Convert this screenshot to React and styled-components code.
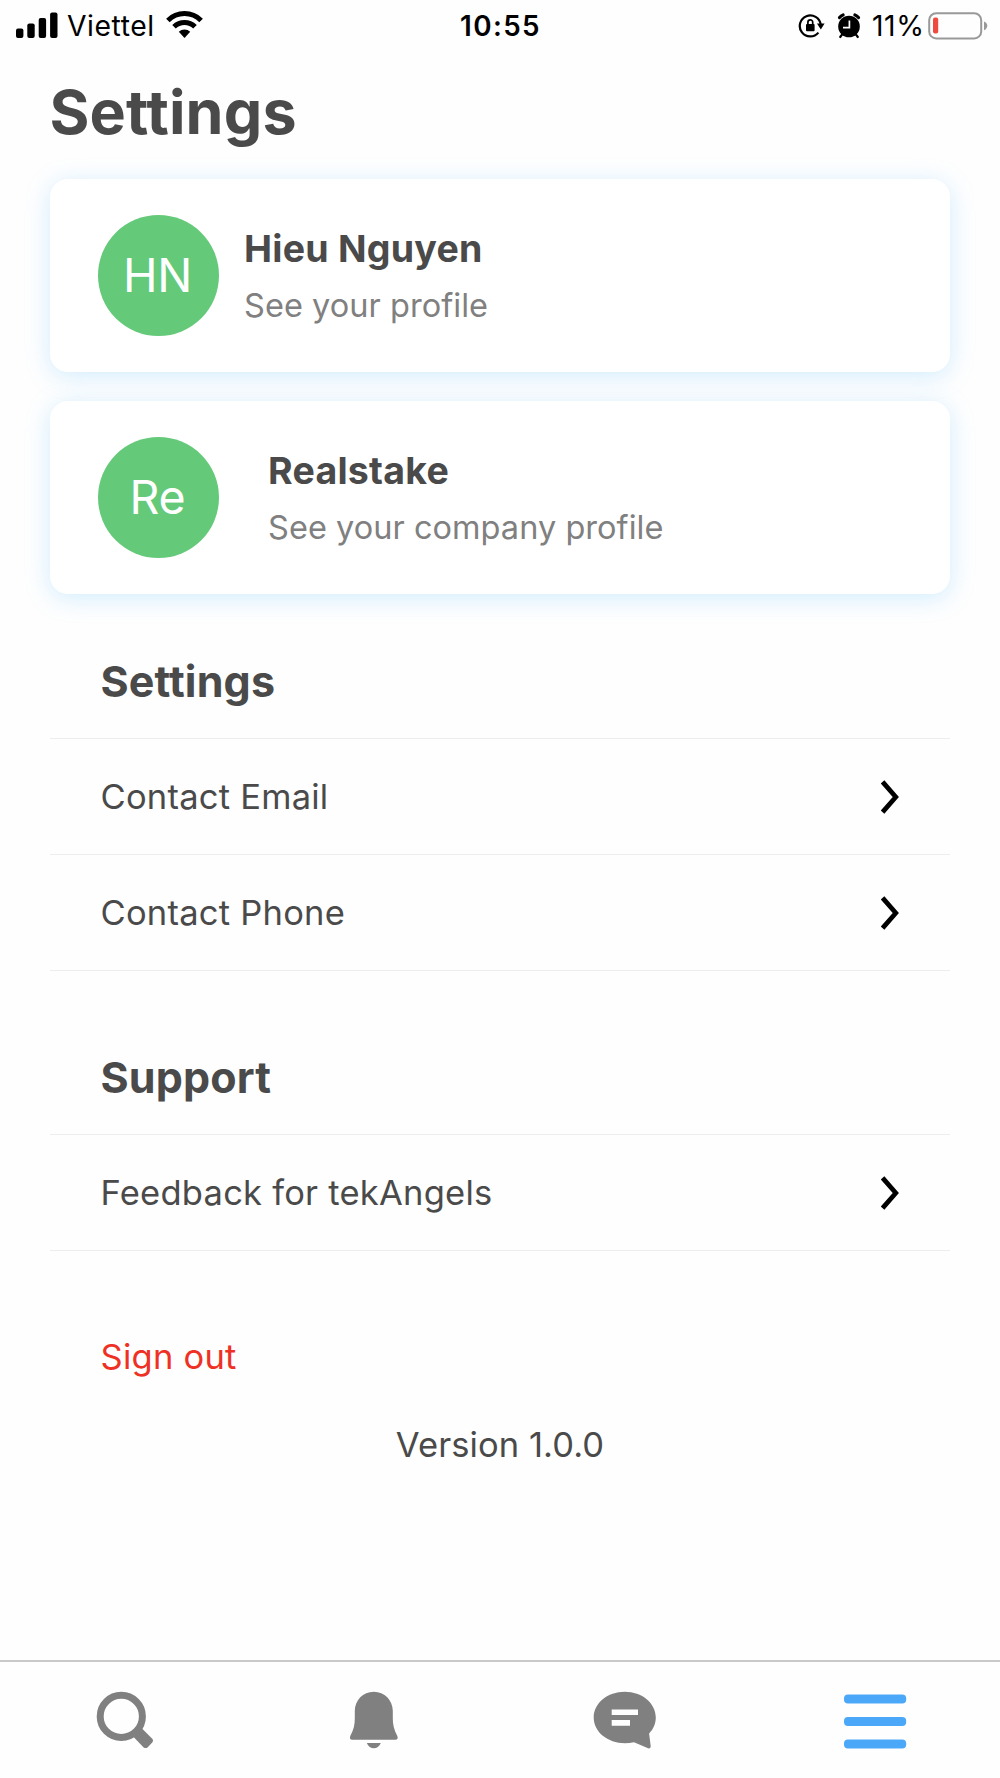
import React from 'react';
import styled, { createGlobalStyle } from 'styled-components';

const colors = {
  text: '#4a4a4a',
  gray: '#808080',
  green: '#65c97a',
  red: '#ee3124',
  blue: '#4ba8f8',
};

const GlobalStyle = createGlobalStyle`
  * {
    box-sizing: border-box;
    margin: 0;
    padding: 0;
  }

  body {
    background-color: #fefefe;
    font-family: Inter, 'Liberation Sans', sans-serif;
    color: ${colors.text};
  }

  svg {
    display: block;
    flex-shrink: 0;
  }
`;

const Screen = styled.div`
  width: 1000px;
  height: 1778px;
  display: flex;
  flex-direction: column;
  overflow: hidden;
`;

const StatusBar = styled.header`
  height: 50px;
  display: grid;
  grid-template-columns: 1fr auto 1fr;
  align-items: center;
  padding: 0 12px;
  color: #000;
`;

const StatusSide = styled.div`
  display: flex;
  align-items: center;
  padding-left: 4px;
  justify-content: ${(props) => (props.$right ? 'flex-end' : 'flex-start')};
`;

const StatusIcons = styled.div`
  display: flex;
  align-items: center;
  gap: 12px;
`;

const StatusText = styled.span`
  padding-top: 1px;
  font-size: 28.3px;
  line-height: 50px;
  letter-spacing: 0.55px;
  margin: ${(props) => props.$margin};
`;

const Clock = styled.span`
  padding: 1px 0 0 1px;
  font-size: 27.8px;
  font-weight: 600;
  line-height: 50px;
  letter-spacing: 1.4px;
`;

const Content = styled.main`
  flex: 1;
  padding: 0 50px;
`;

const PageTitle = styled.h1`
  height: 129px;
  padding-top: 22px;
  font-size: 61px;
  font-weight: 700;
  line-height: 80px;
  letter-spacing: 0.15px;
  text-indent: -0.5px;
`;

const ProfileCard = styled.section`
  height: 193px;
  margin-bottom: 29px;
  padding-left: 48px;
  display: flex;
  align-items: center;
  gap: ${(props) => props.$gap};
  border-radius: 18px;
  background-color: #fff;
  box-shadow: 0 4px 24px rgba(90, 190, 250, 0.27);
`;

const Avatar = styled.div`
  width: 121px;
  height: 121px;
  padding: 0 2px 1px 0;
  border-radius: 50%;
  display: flex;
  align-items: center;
  justify-content: center;
  background-color: ${colors.green};
  color: #fff;
  font-size: 46.5px;
  letter-spacing: -0.3px;
`;

const ProfileText = styled.div`
  display: flex;
  flex-direction: column;
  gap: 9px;
  padding-top: 3px;
`;

const ProfileName = styled.p`
  font-size: 37.5px;
  font-weight: 700;
  line-height: 48px;
  letter-spacing: 0.25px;
`;

const ProfileLink = styled.p`
  font-size: 32.5px;
  line-height: 48px;
  letter-spacing: 0.04px;
  color: ${colors.gray};
`;

const Section = styled.section`
  margin-bottom: ${(props) => props.$bottom};
`;

const SectionTitle = styled.h2`
  height: 115px;
  padding: 30px 50px 0;
  font-size: 43px;
  font-weight: 700;
  line-height: 56px;
  letter-spacing: 0.15px;
  text-indent: 0.5px;
`;

const Row = styled.div`
  height: 116px;
  padding: 0 51px 0 50.5px;
  display: flex;
  align-items: center;
  justify-content: space-between;
  border-top: 1px solid #ecedee;
  font-size: 34.5px;
  letter-spacing: 0.24px;

  &:last-child {
    height: 117px;
    border-bottom: 1px solid #ecedee;
  }
`;

const SignOut = styled.p`
  padding-left: 50.5px;
  font-size: 34.5px;
  line-height: 48px;
  letter-spacing: 0.25px;
  color: ${colors.red};
`;

const Version = styled.p`
  margin-top: 40px;
  font-size: 34.5px;
  line-height: 48px;
  letter-spacing: 0.08px;
  text-align: center;
`;

const TabBar = styled.nav`
  height: 118px;
  padding-top: 26px;
  display: grid;
  grid-template-columns: repeat(4, 1fr);
  justify-items: center;
  border-top: 2px solid #c9c9c9;
  color: ${colors.gray};
`;

const Tab = styled.div`
  width: 64px;
  height: 64px;
  color: ${(props) => (props.$active ? colors.blue : 'inherit')};
`;

const SignalIcon = () => (
  <svg width="42" height="27" viewBox="0 0 42 27">
    <rect x="0" y="16.5" width="7.4" height="9.5" rx="2" />
    <rect x="11.3" y="11.5" width="7.4" height="14.5" rx="2" />
    <rect x="22.7" y="6" width="7.4" height="20" rx="2" />
    <rect x="34.1" y="0.5" width="7.4" height="25.5" rx="2" />
  </svg>
);

const WifiIcon = () => (
  <svg width="37" height="29" viewBox="0 0 37 29">
    <g fill="none" stroke="#000">
      <path d="M1.9 9.4a23.5 23.5 0 0 1 33.2 0" strokeWidth="5" />
      <path d="M8 15.8a14.8 14.8 0 0 1 21 0" strokeWidth="5" />
    </g>
    <path d="M12.8 20.8a8.1 8.1 0 0 1 11.4 0L18.5 27Z" />
  </svg>
);

const RotationLockIcon = () => (
  <svg width="27" height="27" viewBox="0 0 27 27">
    <path
      d="M22.7 12.6A10.5 10.5 0 1 0 20.4 20.6"
      fill="none"
      stroke="#000"
      strokeWidth="2.2"
    />
    <path d="M19 11.4h7.6l-3.8 6Z" />
    <rect x="8" y="12" width="8.6" height="7.2" rx="1" />
    <path
      d="M9.9 13v-2.8a2.4 2.4 0 0 1 4.8 0V13"
      fill="none"
      stroke="#000"
      strokeWidth="1.7"
    />
  </svg>
);

const AlarmIcon = () => (
  <svg width="24" height="27" viewBox="0 0 24 27">
    <circle cx="12" cy="14.5" r="10.8" />
    <g fill="none" stroke="#000" strokeLinecap="round">
      <path d="M2.4 5.6a14 14 0 0 1 3.8-2.8" strokeWidth="3" />
      <path d="M21.6 5.6a14 14 0 0 0-3.8-2.8" strokeWidth="3" />
      <path d="M5.2 22.4l-2 2.6M18.8 22.4l2 2.6" strokeWidth="2.2" />
    </g>
    <path d="M12.4 8.4v7.2H6" fill="none" stroke="#fff" strokeWidth="1.7" />
  </svg>
);

const BatteryIcon = () => (
  <svg width="60" height="28" viewBox="0 0 60 28">
    <rect
      x="1.2"
      y="1.2"
      width="52"
      height="25.2"
      rx="7"
      fill="none"
      stroke="#999"
      strokeWidth="2"
    />
    <rect x="5" y="5.6" width="5.2" height="16" rx="2" fill="#ee4b3e" />
    <path d="M56 9.4c4.4 1.6 4.4 7.2 0 8.8Z" fill="#999" />
  </svg>
);

const Chevron = () => (
  <svg width="18" height="34" viewBox="0 0 18 34">
    <path
      d="M1.6 1.9L14.8 17L1.6 32.1"
      fill="none"
      stroke="#000"
      strokeWidth="4.7"
    />
  </svg>
);

const SearchIcon = () => (
  <svg width="64" height="64" viewBox="0 0 64 64" fill="currentColor">
    <circle
      cx="28.3"
      cy="28.4"
      r="21.1"
      fill="none"
      stroke="currentColor"
      strokeWidth="7"
    />
    <path d="M49 40.6L59 50.4q2 2.2 0 4.4l-4.2 4.4q-2.2 1.8-4.4 0L40.6 49Z" />
  </svg>
);

const BellIcon = () => (
  <svg width="64" height="64" viewBox="0 0 64 64" fill="currentColor">
    <path d="M30.8 3.8c10.8 0 19 8.6 19 19v7.8c0 6 1.2 11.600 4.5 17.3c.9 1.900.2 3.900-2 3.900H9.300c-2.200 0-2.900-2-2-3.900C10.600 42.200 11.800 37 11.800 30.600v-7.800C11.800 12.400 20 3.800 30.800 3.800Z" />
    <path d="M23.8 55h14c-2.600 7-11.400 7-14 0Z" />
  </svg>
);

const ChatIcon = () => (
  <svg width="64" height="64" viewBox="0 0 64 64" fill="currentColor">
    <path d="M31.8 3.8C49 3.8 62.8 15.2 62.8 29.5c0 6.2-2.6 12-6.7 15.9l1.6 12.5c.2 2-1.4 3-3.2 2.2L41 54.3c-3 .6-6 .9-9.2.9C14.6 55.2.7 43.8.7 29.5S14.6 3.8 31.8 3.8Z" />
    <path
      d="M18.7 21.5h26.3v5.5H18.7ZM18.7 32h18.3v5.7H18.7Z"
      fill="#fefefe"
    />
  </svg>
);

const MenuIcon = () => (
  <svg width="64" height="64" viewBox="0 0 64 64" fill="currentColor">
    <rect x="1" y="6.5" width="62.2" height="9" rx="4" />
    <rect x="1" y="29" width="62.2" height="9" rx="4" />
    <rect x="1" y="51.5" width="62.2" height="9" rx="4" />
  </svg>
);

const profiles = [
  { initials: 'HN', name: 'Hieu Nguyen', link: 'See your profile', gap: '25px' },
  {
    initials: 'Re',
    name: 'Realstake',
    link: 'See your company profile',
    gap: '49px',
  },
];

const sections = [
  {
    title: 'Settings',
    rows: ['Contact Email', 'Contact Phone'],
    bottom: '48px',
  },
  { title: 'Support', rows: ['Feedback for tekAngels'], bottom: '82px' },
];

const App = () => {
  return (
    <Screen>
      <GlobalStyle />
      <StatusBar>
        <StatusSide>
          <SignalIcon />
          <StatusText $margin="0 11px 0 9px">Viettel</StatusText>
          <WifiIcon />
        </StatusSide>
        <Clock>10:55</Clock>
        <StatusSide $right>
          <StatusIcons>
            <RotationLockIcon />
            <AlarmIcon />
          </StatusIcons>
          <StatusText $margin="0 3.5px 0 11px">11%</StatusText>
          <BatteryIcon />
        </StatusSide>
      </StatusBar>

      <Content>
        <PageTitle>Settings</PageTitle>
        {profiles.map((profile) => (
          <ProfileCard key={profile.name} $gap={profile.gap}>
            <Avatar>{profile.initials}</Avatar>
            <ProfileText>
              <ProfileName>{profile.name}</ProfileName>
              <ProfileLink>{profile.link}</ProfileLink>
            </ProfileText>
          </ProfileCard>
        ))}

        {sections.map((section) => (
          <Section key={section.title} $bottom={section.bottom}>
            <SectionTitle>{section.title}</SectionTitle>
            {section.rows.map((row) => (
              <Row key={row}>
                {row}
                <Chevron />
              </Row>
            ))}
          </Section>
        ))}

        <SignOut>Sign out</SignOut>
        <Version>Version 1.0.0</Version>
      </Content>

      <TabBar>
        <Tab>
          <SearchIcon />
        </Tab>
        <Tab>
          <BellIcon />
        </Tab>
        <Tab>
          <ChatIcon />
        </Tab>
        <Tab $active>
          <MenuIcon />
        </Tab>
      </TabBar>
    </Screen>
  );
};

export default App;
